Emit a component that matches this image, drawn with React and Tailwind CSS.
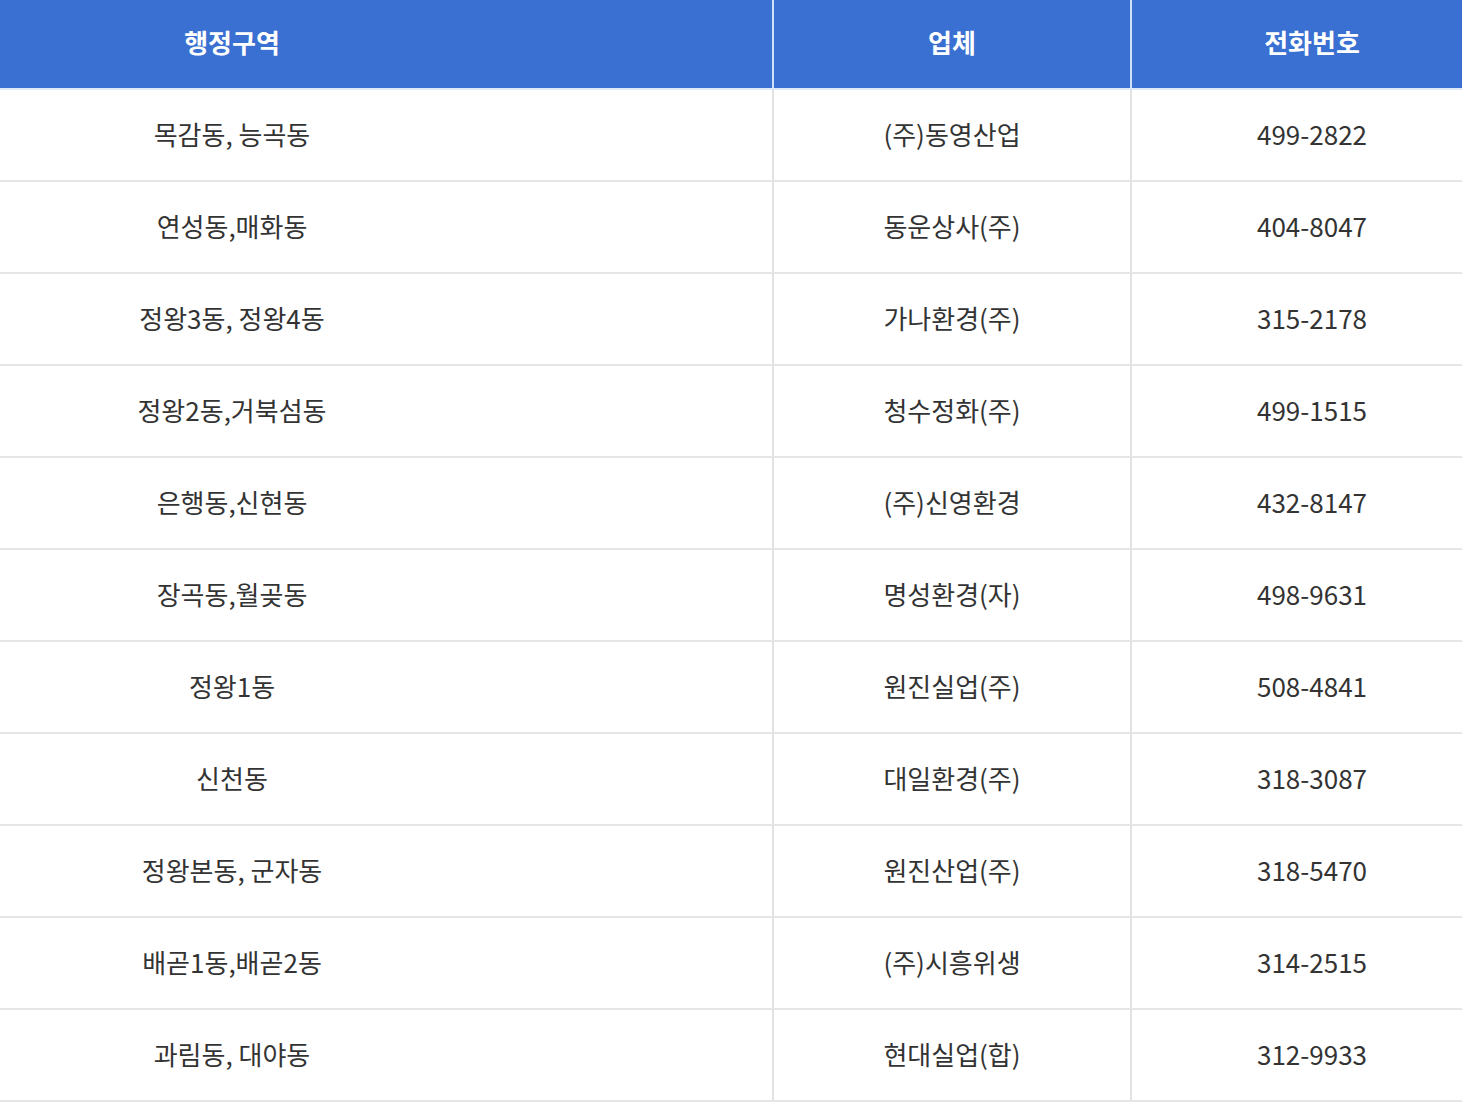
import React from 'react';

const rows = [
  ['목감동, 능곡동', '(주)동영산업', '499-2822'],
  ['연성동,매화동', '동운상사(주)', '404-8047'],
  ['정왕3동, 정왕4동', '가나환경(주)', '315-2178'],
  ['정왕2동,거북섬동', '청수정화(주)', '499-1515'],
  ['은행동,신현동', '(주)신영환경', '432-8147'],
  ['장곡동,월곶동', '명성환경(자)', '498-9631'],
  ['정왕1동', '원진실업(주)', '508-4841'],
  ['신천동', '대일환경(주)', '318-3087'],
  ['정왕본동, 군자동', '원진산업(주)', '318-5470'],
  ['배곧1동,배곧2동', '(주)시흥위생', '314-2515'],
  ['과림동, 대야동', '현대실업(합)', '312-9933'],
];

function App() {
  return (
    <div
      className="w-[1462px] h-[1114px] bg-white overflow-hidden"
      style={{ fontFamily: '"Noto Sans CJK KR", "Noto Sans", sans-serif' }}
    >
      <div className="grid grid-cols-[774px_358px_330px] h-[90px] bg-[#3a70d1] border-b-2 border-[#dfe8f7] text-white text-[26px] font-bold">
        <div className="flex items-center justify-center pr-[308px] pb-[6px] border-r-2 border-[#cfe0f8]">행정구역</div>
        <div className="flex items-center justify-center pb-[6px] border-r-2 border-[#cfe0f8]">업체</div>
        <div className="flex items-center justify-center pl-[30px] pb-[6px]">전화번호</div>
      </div>
      {rows.map(([area, company, phone]) => (
        <div
          key={phone}
          className="grid grid-cols-[774px_358px_330px] h-[92px] border-b-2 border-[#e6e6e6] text-[26px] text-[#333]"
        >
          <div className="flex items-center justify-center pr-[308px] pb-[4px] border-r-2 border-[#e2e2e2]">{area}</div>
          <div className="flex items-center justify-center pb-[4px] border-r-2 border-[#e2e2e2]">{company}</div>
          <div className="flex items-center justify-center pl-[30px] pb-[4px]">{phone}</div>
        </div>
      ))}
    </div>
  );
}

export default App;
